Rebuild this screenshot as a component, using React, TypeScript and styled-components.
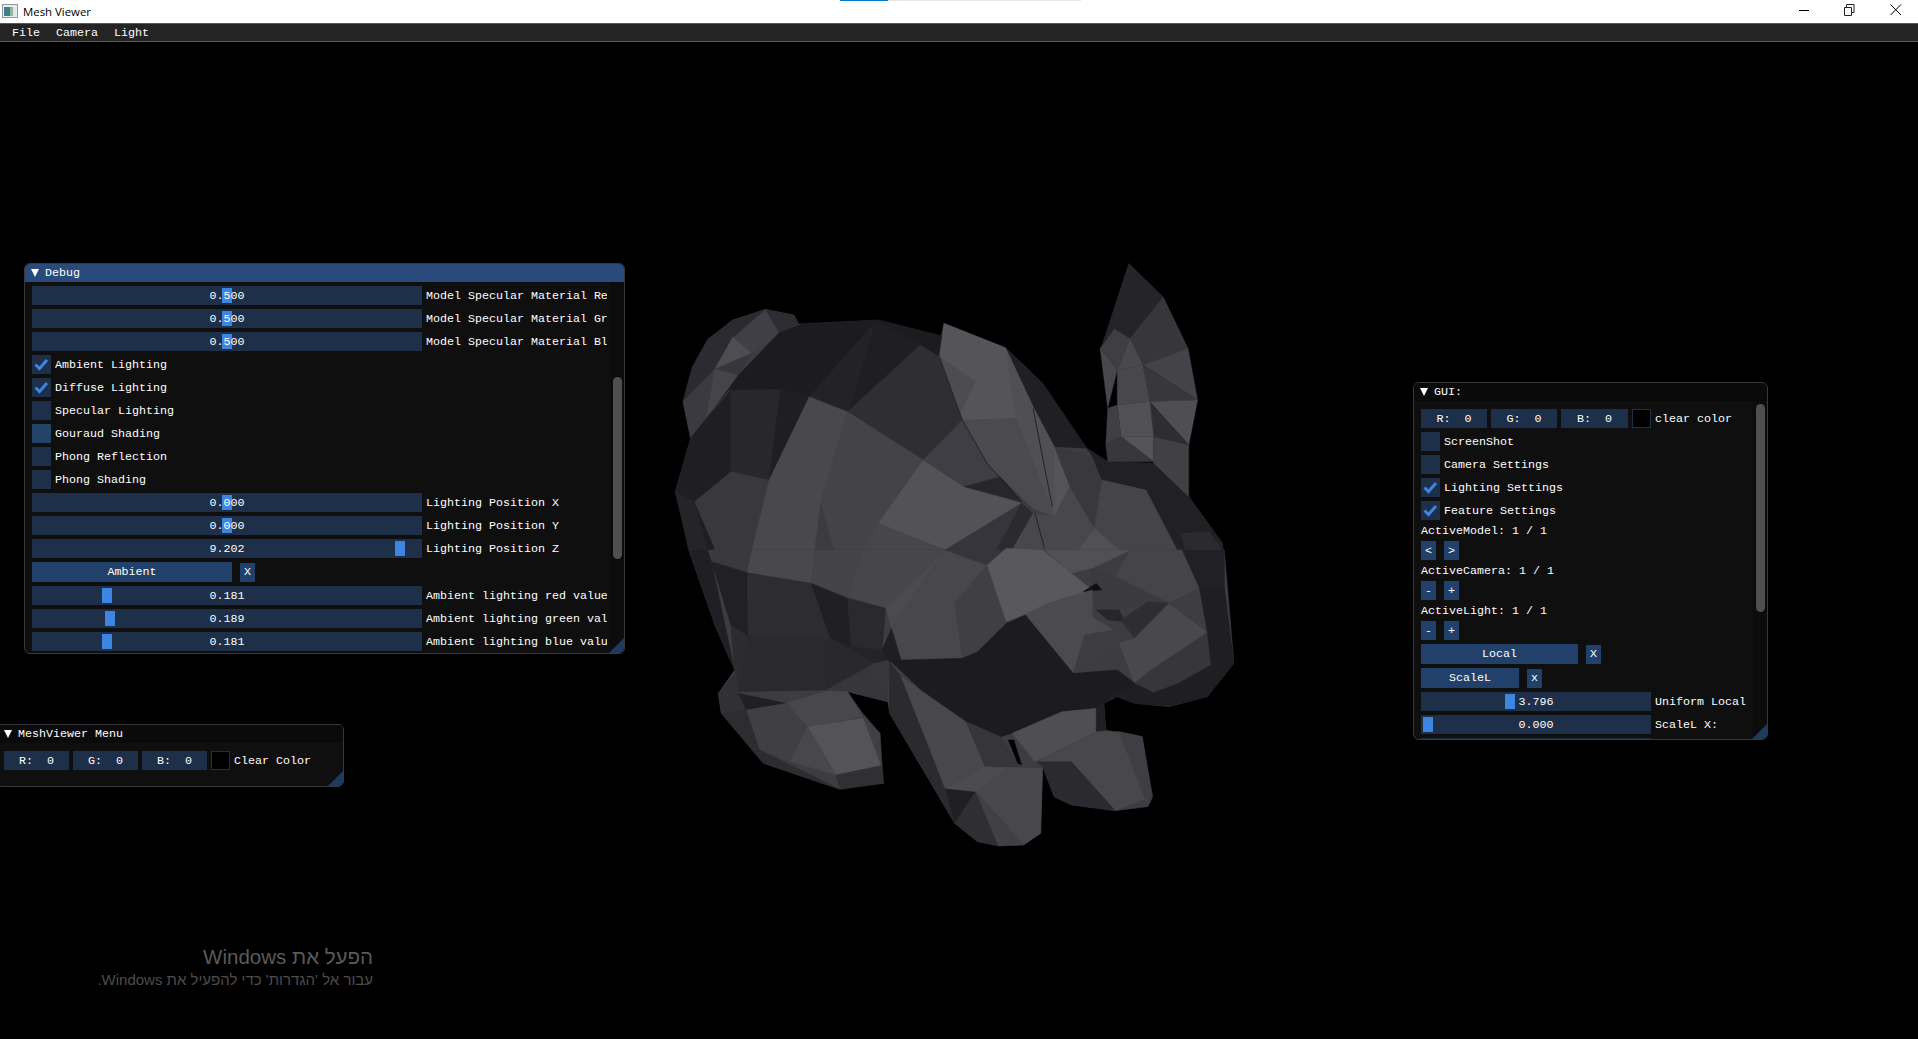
import React from "react";
import styled, { createGlobalStyle } from "styled-components";

const Global = createGlobalStyle`
  html, body { margin: 0; padding: 0; background: #000; overflow: hidden; }
  * { box-sizing: border-box; }
`;

const Screen = styled.div`
  position: relative;
  width: 1918px;
  height: 1039px;
  background: #000;
  overflow: hidden;
  display: flex;
  flex-direction: column;
  font-family: "Liberation Mono", monospace;
  font-size: 11.667px;
  color: #fff;
`;

const TitleBar = styled.header`
  position: relative;
  height: 23px;
  flex: none;
  background: #fff;
  display: flex;
  align-items: center;
  padding: 0 0 2px 2px;
  font-family: "Open Sans", "Liberation Sans", sans-serif;
  font-size: 11.4px;
  color: #000;
`;

const TitleText = styled.span`
  margin-left: 5px;
  padding-top: 1px;
  flex: 1;
`;

const Progress = styled.div`
  position: absolute;
  left: 840px;
  top: 0;
  width: 241px;
  height: 1px;
  background: linear-gradient(to right, #0078d7 48px, #e6e6e6 48px);
`;

const Controls = styled.div`
  display: flex;
  align-items: center;
  gap: 29px;
  padding: 0 16px 2px 0;
`;

const MenuBar = styled.nav`
  height: 19px;
  flex: none;
  background: #242424;
  border-top: 1px solid #5a5a5a;
  border-bottom: 1px solid #5a5a5a;
  display: flex;
  align-items: center;
  gap: 16px;
  padding-left: 12px;
`;

const Canvas = styled.main`
  flex: 1;
`;

const Bunny = styled.svg`
  position: absolute;
  left: 0;
  top: 0;
`;

const Win = styled.section<{ $x: number; $y: number; $w: number; $h: number }>`
  position: absolute;
  left: ${(p) => p.$x}px;
  top: ${(p) => p.$y}px;
  width: ${(p) => p.$w}px;
  height: ${(p) => p.$h}px;
  background: #0f0f0f;
  border: 1px solid #37373f;
  border-radius: 6px;
  overflow: hidden;
  display: flex;
  flex-direction: column;
`;

const WinTitle = styled.div<{ $active?: boolean; $indent?: number }>`
  height: 18px;
  flex: none;
  display: flex;
  align-items: center;
  gap: 6px;
  padding-left: ${(p) => p.$indent ?? 6}px;
  background: ${(p) => (p.$active ? "#294a7a" : "#0a0a0a")};
`;

const Arrow = styled.i`
  width: 0;
  height: 0;
  border-left: 4.5px solid transparent;
  border-right: 4.5px solid transparent;
  border-top: 8px solid #fff;
`;

const WinBody = styled.div`
  flex: 1;
  min-height: 0;
  display: flex;
`;

const Content = styled.div<{ $top: number }>`
  flex: 1;
  min-width: 0;
  overflow: hidden;
  display: flex;
  flex-direction: column;
  gap: 4px;
  padding: ${(p) => p.$top}px 3px 0 7px;
`;

const Track = styled.div<{ $pad: number; $bottom: number }>`
  width: 14px;
  flex: none;
  background: #0c0c0c;
  padding: ${(p) => p.$pad}px 2px ${(p) => p.$bottom}px 3px;
  display: flex;
`;

const Thumb = styled.div`
  flex: 1;
  background: #4f4f4f;
  border-radius: 5px;
`;

const Grip = styled.div`
  position: absolute;
  right: 0;
  bottom: 0;
  width: 15px;
  height: 15px;
  background: #1e3a5c;
  clip-path: polygon(100% 0, 100% 100%, 0 100%);
`;

const Row = styled.div`
  flex: none;
  display: flex;
  align-items: center;
  gap: 4px;
  height: 19px;
  white-space: pre;
`;

const PairRow = styled(Row)<{ $h?: number }>`
  gap: 8px;
  height: ${(p) => p.$h ?? 19}px;
`;

const TextLine = styled.div`
  flex: none;
  height: 13px;
  line-height: 15px;
  white-space: pre;
`;

const Label = styled.span`
  flex: 1;
  min-width: 0;
  height: 19px;
  overflow: hidden;
  line-height: 21px;
`;

const Frame = styled.div<{ $w: number }>`
  position: relative;
  flex: none;
  width: ${(p) => p.$w}px;
  height: 19px;
  background: #1d2f49;
  display: flex;
  align-items: center;
  justify-content: center;
`;

const Value = styled.span`
  position: relative;
  white-space: pre;
`;

const Grab = styled.i<{ $left: number }>`
  position: absolute;
  left: ${(p) => p.$left}px;
  top: 2px;
  width: 10px;
  height: 15px;
  background: #3d85e0;
`;

const Swatch = styled.div`
  flex: none;
  width: 19px;
  height: 19px;
  background: #000;
  border: 1px solid #1d2f49;
`;

const Box = styled.div<{ $hover?: boolean }>`
  flex: none;
  width: 19px;
  height: 19px;
  background: ${(p) => (p.$hover ? "#234468" : "#1d2f49")};
  display: flex;
  align-items: center;
  justify-content: center;
`;

const Btn = styled.div<{ $w: number; $h?: number }>`
  flex: none;
  width: ${(p) => p.$w}px;
  height: ${(p) => p.$h ?? 19}px;
  background: #21416b;
  display: flex;
  align-items: center;
  justify-content: center;
`;

const Watermark = styled.div`
  position: absolute;
  left: 0;
  top: 945px;
  width: 373px;
  direction: rtl;
  font-family: "Liberation Sans", "Open Sans", sans-serif;
  color: #5a5a5a;
  white-space: nowrap;
`;

const MarkTitle = styled.div`
  font-size: 20.5px;
  line-height: 24px;
`;

const MarkSub = styled.div`
  font-size: 15px;
  line-height: 21px;
  color: #4c4c4c;
`;

const Check = () => (
  <svg width="15" height="13" viewBox="0 0 15 13">
    <path d="M1.5 6.5 L5.5 10.5 L13 2" fill="none" stroke="#3d85e0" strokeWidth="3" />
  </svg>
);

const Slider = ({ v, left, w = 390, label }: { v?: string; left: number; w?: number; label?: string }) => (
  <Row>
    <Frame $w={w}>
      <Grab $left={left} />
      {v && <Value>{v}</Value>}
    </Frame>
    {label && <Label>{label}</Label>}
  </Row>
);

const Toggle = ({ on, hover, label }: { on?: boolean; hover?: boolean; label: string }) => (
  <Row>
    <Box $hover={hover}>{on && <Check />}</Box>
    <Label>{label}</Label>
  </Row>
);

const Rgb = ({ w, label }: { w: number[]; label: string }) => (
  <Row>
    <Frame $w={w[0]}><Value>R:  0</Value></Frame>
    <Frame $w={w[1]}><Value>G:  0</Value></Frame>
    <Frame $w={w[2]}><Value>B:  0</Value></Frame>
    <Swatch />
    <Label>{label}</Label>
  </Row>
);

type Facet = [string, string];

/* Coordinates read from the upper crop (x 660.., y 250..) */
const upper: Facet[] = [
  ["#3c3c41", "60,455 85,350 125,268 190,210 275,178 350,195 362,222 570,210 735,258 742,220 903,293 1000,400 1115,595 1170,635 1290,640 1382,740 1470,880 1475,930 85,930 40,725 80,565"],
  ["#2c2c32", "275,178 350,195 362,222 312,252"],
  ["#3f3f45", "190,262 275,178 312,252 240,310"],
  ["#2a2a30", "125,268 190,210 275,178 190,262"],
  ["#2b2b31", "85,350 125,268 190,262 143,358"],
  ["#4d4d52", "190,262 240,310 143,358"],
  ["#36363c", "143,358 240,310 205,375"],
  ["#2a2a30", "60,455 85,350 143,358"],
  ["#3a3a40", "60,455 143,358 120,510 80,565"],
  ["#444449", "143,358 205,375 120,510"],
  ["#1b1b20", "80,565 120,510 205,375 310,250 370,222 570,210 738,258 730,320 680,285 490,485 390,440 180,420"],
  ["#222227", "565,212 680,285 490,485 390,440"],
  ["#1e1e23", "565,212 680,285 495,480"],
  ["#2e2e33", "680,285 730,320 790,510 688,630 490,485"],
  ["#1e1e23", "80,565 40,725 75,900 140,900 185,665 185,420 120,510"],
  ["#27272c", "185,420 315,418 390,440 285,690 185,665"],
  ["#1e1e23", "315,418 390,440 285,690"],
  ["#38383d", "90,755 185,665 285,690 240,900 145,900"],
  ["#242429", "40,725 90,755 125,900 75,900"],
  ["#48484d", "390,440 490,485 420,760 405,900 240,900 285,690"],
  ["#434348", "490,485 688,630 570,820 530,900 405,900 420,760"],
  ["#3b3b40", "420,760 405,900 455,900"],
  ["#525257", "688,630 795,710 945,760 745,900 570,820"],
  ["#46464b", "570,820 745,900 530,900"],
  ["#3e3e44", "688,630 790,510 855,640 890,680 795,710"],
  ["#26262b", "795,710 890,680 945,755"],
  ["#35353b", "945,760 880,900 745,900"],
  ["#2a2a2f", "945,760 975,790 920,900 880,900"],
  ["#47474c", "975,790 1005,900 920,900"],
  ["#1f1f24", "903,293 1000,400 1115,595 1030,590 975,470"],
  ["#38383d", "1030,590 1130,620 1155,690 1135,835 1070,710"],
  ["#202025", "1115,595 1170,635 1290,640 1382,740 1470,880 1475,930 1365,930 1270,720 1155,690 1130,620"],
  ["#454549", "1155,690 1270,720 1365,930 1230,930 1135,835"],
  ["#505055", "1135,835 1230,930 1070,930"],
  ["#47474c", "1070,710 1135,835 1070,930 1005,930 975,790 1030,800"],
  ["#2a2a2f", "1360,850 1435,845 1470,900 1380,930"],
  ["#545459", "742,220 903,293 975,470 1030,590 1070,710 1030,800 975,775 855,640 790,510 730,320"],
  ["#4c4c51", "730,320 825,395 785,490"],
  ["#4f4f54", "905,300 975,470 1030,590 1030,800 930,505"],
  ["#4a4a4f", "790,510 930,505 1030,800 975,775 855,640"],
  ["#242429", "1225,40 1315,140 1228,265 1187,237 1155,285"],
  ["#36363b", "1315,140 1380,295 1262,345 1228,265"],
  ["#3e3e43", "1187,237 1228,265 1195,360 1150,295"],
  ["#48484d", "1228,265 1262,345 1195,360"],
  ["#434348", "1380,295 1405,450 1262,345"],
  ["#37373c", "1262,345 1405,450 1280,455"],
  ["#47474c", "1150,295 1195,360 1170,475"],
  ["#47474c", "1195,360 1262,345 1280,455 1195,465"],
  ["#4e4e53", "1280,455 1405,450 1382,585"],
  ["#2d2d32", "1280,455 1382,585 1290,560"],
  ["#505055", "1195,465 1280,455 1290,560 1205,560"],
  ["#3f3f44", "1170,475 1195,465 1205,560 1165,585"],
  ["#535358", "1205,560 1290,560 1290,635"],
  ["#37373c", "1165,585 1205,560 1290,635 1170,635"],
  ["#404045", "1290,560 1382,585 1382,740 1290,640"],
];

const upperLines = [
  "730,320 790,510 855,640 945,755",
  "975,475 1025,770",
  "980,790 1005,895",
];

/* Coordinates read from the lower crop (x 660.., y 540..) */
const lower: Facet[] = [
  ["#3c3c41", "75,30 1475,30 1500,370 1430,470 1330,500 1240,490 1195,470 1160,490 1165,570 1260,590 1288,770 1275,800 1190,812 1075,795 1030,770 1000,680 995,880 950,915 885,918 830,905 770,850 600,520 595,485 490,455 530,520 575,580 584,730 470,748 270,670 160,520 152,460 195,390 145,260"],
  ["#1f1f24", "75,30 125,30 135,65 195,390 145,260"],
  ["#38383d", "140,30 240,30 228,98 135,65"],
  ["#48484d", "240,30 405,30 395,130 228,98"],
  ["#434348", "405,30 530,30 490,170 395,130"],
  ["#46464b", "530,30 745,30 590,205 490,170"],
  ["#202025", "135,65 228,98 230,290 185,255"],
  ["#2c2c31", "228,98 395,130 445,295 230,290"],
  ["#1f1f24", "395,130 490,175 500,320 445,295"],
  ["#29292e", "490,175 590,205 580,330 500,320"],
  ["#232328", "580,330 600,360 560,370 445,295 500,320"],
  ["#29292e", "230,290 445,295 435,450 205,455"],
  ["#28282d", "445,295 560,370 435,450"],
  ["#2b2b30", "185,255 230,290 205,460 195,390"],
  ["#37373c", "435,450 560,370 600,360 595,485 540,385"],
  ["#4a4a4f", "590,205 745,30 605,265"],
  ["#47474c", "745,30 855,75 905,245 830,335 790,355 630,360 605,265"],
  ["#35353b", "745,30 905,30 855,75"],
  ["#3f3f44", "855,75 905,245 830,335 790,355 770,190"],
  ["#1e1e23", "580,330 605,265 630,360 600,365"],
  ["#58585d", "905,25 1000,30 1075,100 1130,150 1015,190 950,225 905,245 855,75"],
  ["#505055", "1005,30 1230,30 1130,85 1075,100"],
  ["#454549", "1230,30 1365,30 1410,145 1330,190 1190,110"],
  ["#3a3a3f", "1130,85 1190,110 1330,190 1275,185 1200,210 1140,210 1130,150"],
  ["#111114", "1140,130 1155,150 1105,155"],
  ["#26262b", "1140,210 1200,210 1215,245 1170,240"],
  ["#2d2d32", "1275,185 1330,190 1240,295 1205,240"],
  ["#4a4a4f", "950,225 1015,190 1130,150 1130,230 1185,270 1110,285 1080,400"],
  ["#3d3d42", "1110,285 1185,270 1200,310 1080,400"],
  ["#48484d", "1200,310 1240,295 1330,190 1430,275 1290,385 1240,430"],
  ["#3d3d42", "1330,190 1410,145 1430,275"],
  ["#36363b", "1240,430 1290,385 1430,280 1440,375 1355,430 1290,458"],
  ["#202025", "1365,30 1475,30 1475,140 1410,145"],
  ["#1e1e23", "1410,145 1475,140 1500,370 1430,470 1330,500 1240,490 1195,470 1160,490 1195,390 1240,430 1290,458 1355,430 1440,375 1430,275"],
  ["#1b1b20", "600,360 630,360 790,355 830,335 905,250 955,225 1080,400 1190,390 1200,395 1240,430 1170,475 1150,505 1050,515 920,580 890,590 790,540 700,470"],
  ["#36363b", "490,455 595,485 585,420 540,385 440,450"],
  ["#303035", "160,520 152,460 200,395 205,460 225,510"],
  ["#1f1f24", "205,460 330,490 225,510"],
  ["#47474c", "330,490 440,452 490,455 530,530 385,560"],
  ["#3f3f44", "225,510 330,490 385,560 340,665 260,630"],
  ["#535358", "385,560 535,533 578,675 460,705"],
  ["#47474c", "385,560 460,705 340,665"],
  ["#2c2c31", "160,520 225,510 260,630 350,680 470,748 270,670"],
  ["#2f2f34", "460,705 578,678 584,730 470,748"],
  ["#3f3f44", "530,530 575,580 578,675"],
  ["#2a2a2f", "600,365 630,410 745,745 770,850 600,520"],
  ["#47474c", "630,410 800,545 850,680 745,745"],
  ["#35353a", "800,545 890,590 940,680 850,680"],
  ["#1f1f24", "745,745 825,755 770,850"],
  ["#47474c", "825,755 850,680 1000,685 995,880 950,915"],
  ["#4b4b50", "745,745 850,680 905,685 825,755"],
  ["#2e2e33", "770,850 825,755 885,918 830,905"],
  ["#404045", "825,755 950,915 885,918"],
  ["#4e4e53", "920,580 1050,515 1140,505 1140,575 980,665"],
  ["#1f1f24", "1140,505 1160,490 1165,570 1140,575"],
  ["#47474c", "985,665 1140,575 1200,575 1260,590 1285,770 1190,812 1075,665"],
  ["#2a2a2f", "1075,665 1190,812 1075,795 1030,770 1000,680 985,665"],
  ["#3e3e43", "1200,575 1260,590 1285,770 1275,800"],
  ["#000000", "910,600 925,600 945,675 935,670"],
];

const Facets = ({ list, y, lines = [] }: { list: Facet[]; y: number; lines?: string[] }) => (
  <g transform={`translate(660 ${y}) scale(0.38265 0.33333)`}>
    {list.map(([c, p], i) => (
      <polygon key={i} points={p} fill={c} stroke={c} strokeWidth="1" />
    ))}
    {lines.map((p, i) => (
      <polyline key={i} points={p} fill="none" stroke="#1c1c21" strokeWidth="2.5" />
    ))}
  </g>
);

export default function App() {
  return (
    <Screen>
      <Global />
      <TitleBar>
        <svg width="16" height="14" viewBox="0 0 16 14">
          <rect x="0.5" y="0.5" width="15" height="13" fill="#e8eef0" stroke="#8a9aa0" />
          <rect x="2" y="3" width="6" height="9" fill="#3f7f8a" />
          <rect x="8" y="3" width="3" height="9" fill="#8fb89a" />
          <rect x="11" y="3" width="3" height="9" fill="#dfe8ea" />
        </svg>
        <TitleText>Mesh Viewer</TitleText>
        <Progress />
        <Controls>
          <svg width="16" height="12" viewBox="0 0 16 12">
            <path d="M3 6.5h10" stroke="#000" />
          </svg>
          <svg width="16" height="12" viewBox="0 0 16 12">
            <path d="M3.5 3.5h7v8h-7zM5.5 3.5v-3h7.5v8h-2.5" fill="none" stroke="#222" />
          </svg>
          <svg width="16" height="12" viewBox="-4 0 16 12" overflow="visible">
            <path d="M0.5 0.5l10.5 10.5M11 0.5L0.5 11" stroke="#000" />
          </svg>
        </Controls>
      </TitleBar>
      <MenuBar>
        <span>File</span>
        <span>Camera</span>
        <span>Light</span>
      </MenuBar>
      <Canvas />

      <Bunny width="1918" height="1039" viewBox="0 0 1918 1039">
        <Facets list={upper} y={250} lines={upperLines} />
        <Facets list={lower} y={540} />
      </Bunny>

      <Win $x={24} $y={263} $w={601} $h={391}>
        <WinTitle $active>
          <Arrow />
          Debug
        </WinTitle>
        <WinBody>
          <Content $top={4}>
            <Slider v="0.500" left={190} label="Model Specular Material Re" />
            <Slider v="0.500" left={190} label="Model Specular Material Gr" />
            <Slider v="0.500" left={190} label="Model Specular Material Bl" />
            <Toggle on label="Ambient Lighting" />
            <Toggle on label="Diffuse Lighting" />
            <Toggle label="Specular Lighting" />
            <Toggle hover label="Gouraud Shading" />
            <Toggle label="Phong Reflection" />
            <Toggle label="Phong Shading" />
            <Slider v="0.000" left={190} label="Lighting Position X" />
            <Slider v="0.000" left={190} label="Lighting Position Y" />
            <Slider v="9.202" left={363} label="Lighting Position Z" />
            <PairRow $h={20}>
              <Btn $w={200} $h={20}>Ambient</Btn>
              <Btn $w={15}>X</Btn>
            </PairRow>
            <Slider v="0.181" left={70} label="Ambient lighting red value" />
            <Slider v="0.189" left={73} label="Ambient lighting green val" />
            <Slider v="0.181" left={70} label="Ambient lighting blue valu" />
          </Content>
          <Track $pad={95} $bottom={94}>
            <Thumb />
          </Track>
        </WinBody>
        <Grip />
      </Win>

      <Win $x={-4} $y={724} $w={348} $h={63}>
        <WinTitle $indent={7}>
          <Arrow />
          MeshViewer Menu
        </WinTitle>
        <WinBody>
          <Content $top={8}>
            <Rgb w={[65, 65, 65]} label="Clear Color" />
          </Content>
        </WinBody>
        <Grip />
      </Win>

      <Win $x={1413} $y={382} $w={355} $h={358}>
        <WinTitle>
          <Arrow />
          GUI:
        </WinTitle>
        <WinBody>
          <Content $top={8}>
            <Rgb w={[66, 66, 67]} label="clear color" />
            <Toggle label="ScreenShot" />
            <Toggle label="Camera Settings" />
            <Toggle on label="Lighting Settings" />
            <Toggle on label="Feature Settings" />
            <TextLine>ActiveModel: 1 / 1</TextLine>
            <PairRow>
              <Btn $w={15}>&lt;</Btn>
              <Btn $w={15}>&gt;</Btn>
            </PairRow>
            <TextLine>ActiveCamera: 1 / 1</TextLine>
            <PairRow>
              <Btn $w={15}>-</Btn>
              <Btn $w={15}>+</Btn>
            </PairRow>
            <TextLine>ActiveLight: 1 / 1</TextLine>
            <PairRow>
              <Btn $w={15}>-</Btn>
              <Btn $w={15}>+</Btn>
            </PairRow>
            <PairRow $h={20}>
              <Btn $w={157} $h={20}>Local</Btn>
              <Btn $w={15}>X</Btn>
            </PairRow>
            <PairRow $h={20}>
              <Btn $w={98} $h={20}>ScaleL</Btn>
              <Btn $w={15}>x</Btn>
            </PairRow>
            <Slider v="3.796" left={84} w={230} label="Uniform Local" />
            <Slider v="0.000" left={2} w={230} label="ScaleL X:" />
            <Slider left={2} w={230} />
          </Content>
          <Track $pad={3} $bottom={127}>
            <Thumb />
          </Track>
        </WinBody>
        <Grip />
      </Win>

      <Watermark>
        <MarkTitle>הפעל את Windows</MarkTitle>
        <MarkSub>עבור אל 'הגדרות' כדי להפעיל את Windows.</MarkSub>
      </Watermark>
    </Screen>
  );
}
